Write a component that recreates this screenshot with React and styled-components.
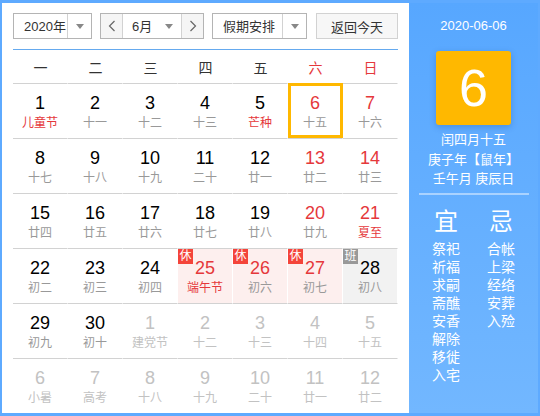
import React from 'react';
import styled, { createGlobalStyle, css } from 'styled-components';

const GlobalStyle = createGlobalStyle`
  html, body {
    margin: 0;
    padding: 0;
    background: #ffffff;
  }
  * {
    box-sizing: border-box;
  }
`;

const RED = '#e5383b';
const FONT = `"Liberation Sans", "Noto Sans CJK SC", sans-serif`;

const Frame = styled.div`
  width: 540px;
  height: 416px;
  display: flex;
  border: 2px solid #5eaaff;
  border-top-width: 3px;
  border-bottom-width: 3px;
  font-family: ${FONT};
  color: #333;
`;

const Main = styled.div`
  width: 407px;
  padding: 10px 11px 0 11px;
  background: #fff;
`;

const Toolbar = styled.div`
  display: flex;
  height: 26px;
  gap: 8px;
  margin-bottom: 10px;
  font-size: 13px;
`;

const Select = styled.div`
  display: flex;
  width: ${p => p.w}px;
  border: 1px solid #b4b4b4;
  background: #fff;
`;

const SelectText = styled.div`
  flex: 1;
  display: flex;
  align-items: center;
  padding-left: ${p => p.pad || 10}px;
  line-height: 1;
`;

const ArrowBox = styled.div`
  width: 24px;
  display: flex;
  align-items: center;
  justify-content: center;
  ${p => p.divided && css`border-left: 1px solid #d2d2d2;`}
`;

const Caret = styled.span`
  width: 0;
  height: 0;
  border-left: 4px solid transparent;
  border-right: 4px solid transparent;
  border-top: 5px solid #888;
`;

const NavBtn = styled.div`
  width: 22px;
  display: flex;
  align-items: center;
  justify-content: center;
  background: #f5f5f5;
  ${p => p.side === 'left' ? css`border-right: 1px solid #d2d2d2;` : css`border-left: 1px solid #d2d2d2;`}
`;

const TodayBtn = styled.div`
  margin-left: 1px;
  width: 82px;
  display: flex;
  align-items: center;
  justify-content: center;
  border: 1px solid #d2d2d2;
  background: #f7f7f7;
`;

const BlueRule = styled.div`
  height: 1px;
  background: #65aaef;
`;

const Grid = styled.div`
  display: grid;
  grid-template-columns: repeat(7, 55px);
`;

const WeekHead = styled.div`
  height: 33px;
  display: flex;
  align-items: center;
  justify-content: center;
  font-size: 14px;
  color: ${p => (p.weekend ? RED : '#333')};
`;

const Cell = styled.div`
  position: relative;
  height: 55px;
  border-top: 1px solid #d2d2d2;
  border-right: 1px solid #fff;
  padding-top: 8px;
  display: flex;
  flex-direction: column;
  align-items: center;
  background: ${p => (p.mark === 'rest' ? '#fdefee' : p.mark === 'work' ? '#f2f2f2' : '#fff')};
  ${p => p.selected && css`
    outline: 3px solid #ffb800;
    outline-offset: -3px;
  `}
`;

const DayNum = styled.div`
  font-size: 18px;
  line-height: 22px;
  color: ${p => p.tone};
`;

const Lunar = styled.div`
  font-size: 12px;
  line-height: 18px;
  color: ${p => p.tone};
`;

const Badge = styled.span`
  position: absolute;
  top: 0;
  left: 0;
  width: 15px;
  height: 15px;
  font-size: 12px;
  line-height: 15px;
  text-align: center;
  color: #fff;
  background: ${p => (p.kind === 'work' ? '#999' : '#f4443a')};
`;

const Side = styled.div`
  flex: 1;
  display: flex;
  flex-direction: column;
  align-items: center;
  padding-top: 13px;
  color: #fff;
  background: linear-gradient(180deg, #57a7ff 0%, #72b7ff 100%);
`;

const SideDate = styled.div`
  font-size: 13px;
  line-height: 20px;
`;

const BigDay = styled.div`
  margin-top: 15px;
  width: 75px;
  height: 74px;
  border-radius: 3px;
  background: #ffb800;
  box-shadow: 0 2px 6px rgba(0, 60, 140, 0.25);
  display: flex;
  align-items: center;
  justify-content: center;
  font-size: 52px;
  line-height: 1;
`;

const LunarInfo = styled.div`
  margin-top: 5px;
  font-size: 13px;
  line-height: 19.5px;
  text-align: center;
`;

const SideRule = styled.div`
  margin-top: 4px;
  width: 110px;
  height: 2px;
  background: rgba(255, 255, 255, 0.45);
`;

const Almanac = styled.div`
  margin-top: 12px;
  display: grid;
  grid-template-columns: 55px 55px;
`;

const AlmanacCol = styled.div`
  display: flex;
  flex-direction: column;
  align-items: center;
`;

const AlmanacHead = styled.div`
  font-size: 24px;
  line-height: 30px;
  margin-bottom: 3px;
`;

const AlmanacItem = styled.div`
  font-size: 14px;
  line-height: 18px;
`;

const Chevron = ({ dir }) => (
  <svg width="8" height="12" viewBox="0 0 8 12">
    <path
      d={dir === 'left' ? 'M6.5 1 L1.5 6 L6.5 11' : 'M1.5 1 L6.5 6 L1.5 11'}
      fill="none"
      stroke="#666"
      strokeWidth="1.2"
    />
  </svg>
);

const weekdays = ['一', '二', '三', '四', '五', '六', '日'];

// [day, lunar, flags]  flags: r = red number, f = red lunar, o = other month, s = selected
const days = [
  [1, '儿童节', 'f'], [2, '十一'], [3, '十二'], [4, '十三'], [5, '芒种', 'f'], [6, '十五', 'rs'], [7, '十六', 'r'],
  [8, '十七'], [9, '十八'], [10, '十九'], [11, '二十'], [12, '廿一'], [13, '廿二', 'r'], [14, '廿三', 'r'],
  [15, '廿四'], [16, '廿五'], [17, '廿六'], [18, '廿七'], [19, '廿八'], [20, '廿九', 'r'], [21, '夏至', 'rf'],
  [22, '初二'], [23, '初三'], [24, '初四'], [25, '端午节', 'rf', 'rest'], [26, '初六', 'r', 'rest'], [27, '初七', 'r', 'rest'], [28, '初八', '', 'work'],
  [29, '初九'], [30, '初十'], [1, '建党节', 'o'], [2, '十二', 'o'], [3, '十三', 'o'], [4, '十四', 'o'], [5, '十五', 'o'],
  [6, '小暑', 'o'], [7, '高考', 'o'], [8, '十八', 'o'], [9, '十九', 'o'], [10, '二十', 'o'], [11, '廿一', 'o'], [12, '廿二', 'o'],
];

const yi = ['祭祀', '祈福', '求嗣', '斋醮', '安香', '解除', '移徙', '入宅'];
const ji = ['合帐', '上梁', '经络', '安葬', '入殓'];

export default function App() {
  return (
    <>
      <GlobalStyle />
      <Frame>
        <Main>
          <Toolbar>
            <Select w={79}>
              <SelectText>2020年</SelectText>
              <ArrowBox divided><Caret /></ArrowBox>
            </Select>
            <Select w={104}>
              <NavBtn side="left"><Chevron dir="left" /></NavBtn>
              <SelectText pad={9}>6月</SelectText>
              <ArrowBox><Caret /></ArrowBox>
              <NavBtn side="right"><Chevron dir="right" /></NavBtn>
            </Select>
            <Select w={95}>
              <SelectText>假期安排</SelectText>
              <ArrowBox divided><Caret /></ArrowBox>
            </Select>
            <TodayBtn>返回今天</TodayBtn>
          </Toolbar>
          <BlueRule />
          <Grid>
            {weekdays.map((w, i) => (
              <WeekHead key={w} weekend={i >= 5}>{w}</WeekHead>
            ))}
            {days.map(([d, lunar, flags = '', mark], i) => {
              const other = flags.includes('o');
              const numTone = other ? '#c2c2c2' : flags.includes('r') ? RED : '#000';
              const lunarTone = other ? '#c2c2c2' : flags.includes('f') ? RED : '#999';
              return (
                <Cell key={i} mark={mark} selected={flags.includes('s')}>
                  {mark && <Badge kind={mark}>{mark === 'work' ? '班' : '休'}</Badge>}
                  <DayNum tone={numTone}>{d}</DayNum>
                  <Lunar tone={lunarTone}>{lunar}</Lunar>
                </Cell>
              );
            })}
          </Grid>
        </Main>
        <Side>
          <SideDate>2020-06-06</SideDate>
          <BigDay>6</BigDay>
          <LunarInfo>
            <div>闰四月十五</div>
            <div>庚子年【鼠年】</div>
            <div>壬午月 庚辰日</div>
          </LunarInfo>
          <SideRule />
          <Almanac>
            <AlmanacCol>
              <AlmanacHead>宜</AlmanacHead>
              {yi.map(t => <AlmanacItem key={t}>{t}</AlmanacItem>)}
            </AlmanacCol>
            <AlmanacCol>
              <AlmanacHead>忌</AlmanacHead>
              {ji.map(t => <AlmanacItem key={t}>{t}</AlmanacItem>)}
            </AlmanacCol>
          </Almanac>
        </Side>
      </Frame>
    </>
  );
}
